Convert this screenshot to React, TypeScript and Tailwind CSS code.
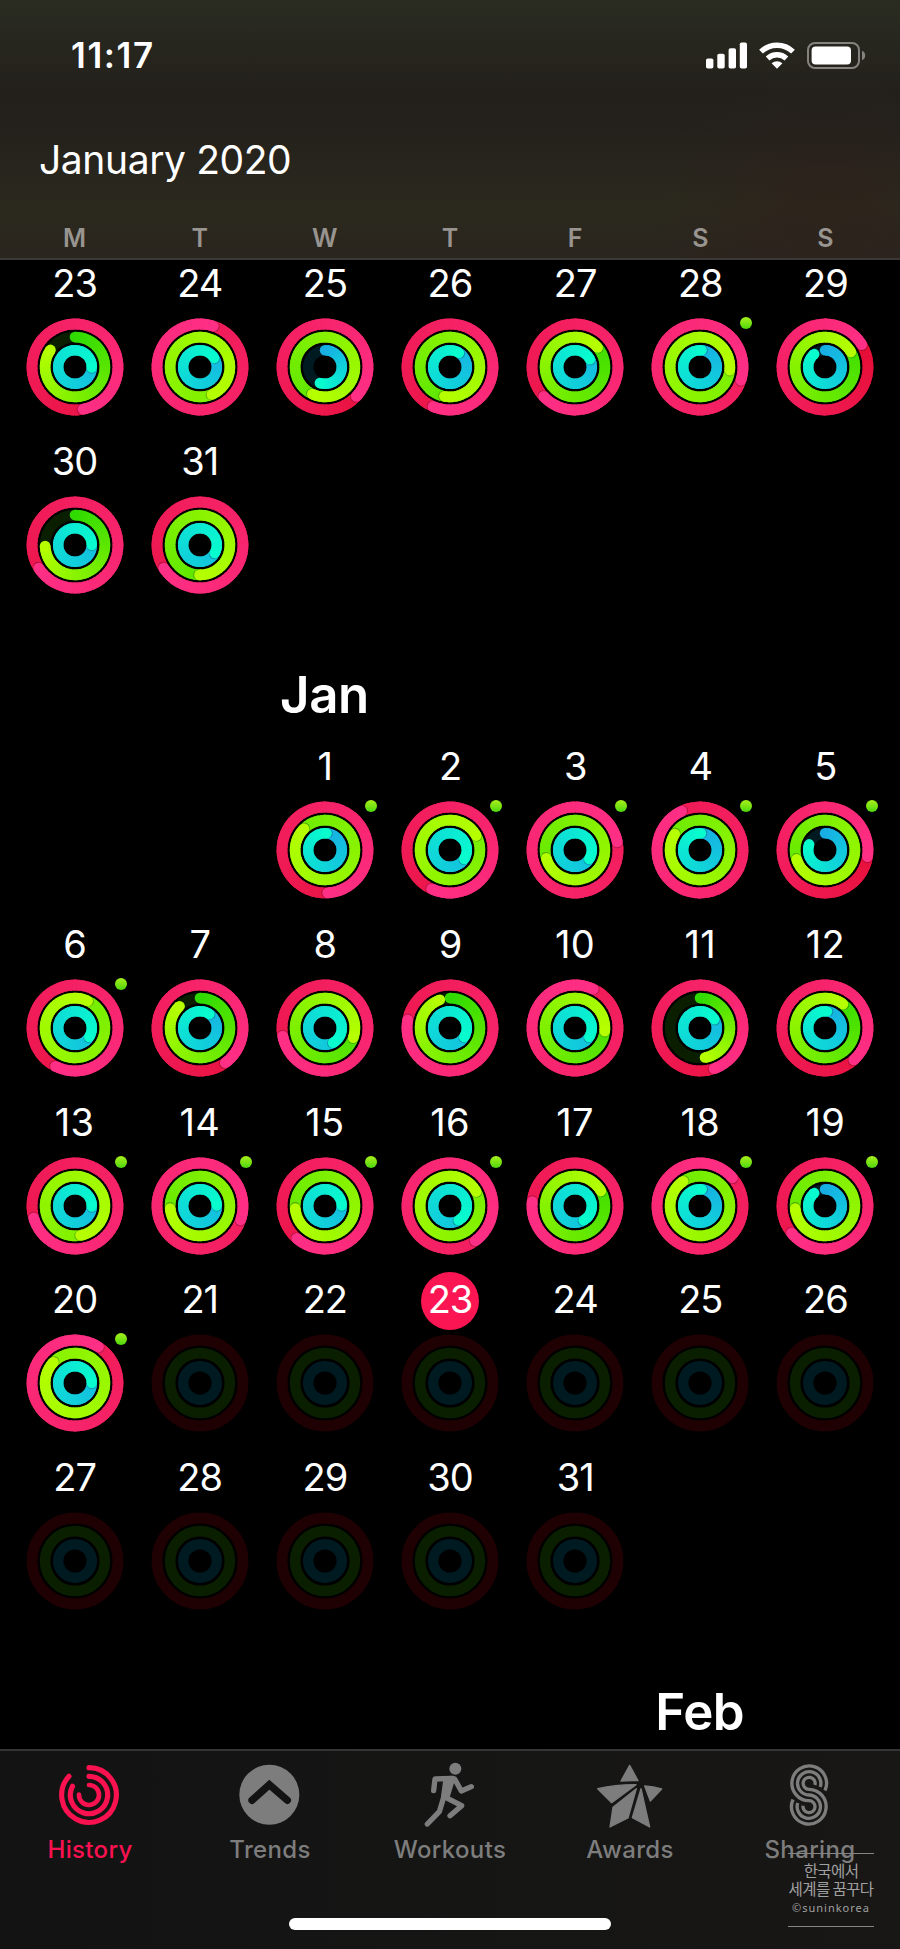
import React from 'react';
import clsx from 'clsx';

type Rgb = [number, number, number];

interface Day {
  day: number;
  // move, exercise and stand progress, 1 = goal reached
  rings?: [number, number, number];
  workout?: boolean;
  today?: boolean;
}

const RINGS: { r: number; width: number; track: string; from: Rgb; to: Rgb }[] = [
  { r: 43, width: 10.8, track: '#1f0003', from: [225, 8, 40], to: [255, 47, 134] },
  { r: 29.9, width: 10.6, track: '#0a1e00', from: [48, 218, 0], to: [182, 255, 0] },
  { r: 16.8, width: 10.4, track: '#001a22', from: [24, 174, 228], to: [8, 252, 206] },
];

const december: Day[] = [
  { day: 23, rings: [1.47, 0.847, 1.255] },
  { day: 24, rings: [2.05, 2.435, 1.16] },
  { day: 25, rings: [1.37, 1.57, 0.55] },
  { day: 26, rings: [1.565, 1.53, 1.09] },
  { day: 27, rings: [1.63, 1.137, 1.175] },
  { day: 28, rings: [2.3, 2.267, 1.015], workout: true },
  { day: 29, rings: [1.163, 1.167, 0.89] },
  { day: 30, rings: [1.66, 0.745, 1.25] },
  { day: 31, rings: [1.66, 1.503, 1.33] },
];

const january: Day[] = [
  { day: 1, rings: [1.49, 1.876, 1.015], workout: true },
  { day: 2, rings: [1.57, 2.17, 1.34], workout: true },
  { day: 3, rings: [2.22, 1.705, 1.34], workout: true },
  { day: 4, rings: [1.93, 1.84, 1.01], workout: true },
  { day: 5, rings: [1.275, 1.7, 0.805], workout: true },
  { day: 6, rings: [1.575, 2.07, 1.34], workout: true },
  { day: 7, rings: [1.4, 0.88, 1.095] },
  { day: 8, rings: [1.72, 1.303, 1.42] },
  { day: 9, rings: [1.78, 0.945, 1.34] },
  { day: 10, rings: [2.07, 1.267, 1.34] },
  { day: 11, rings: [1.447, 0.473, 1.164] },
  { day: 12, rings: [1.383, 1.103, 1.02] },
  { day: 13, rings: [1.705, 2.47, 1.255], workout: true },
  { day: 14, rings: [2.303, 1.737, 1.245], workout: true },
  { day: 15, rings: [1.614, 1.737, 1.245], workout: true },
  { day: 16, rings: [2.4, 2.17, 1.414], workout: true },
  { day: 17, rings: [1.766, 1.167, 1.414] },
  { day: 18, rings: [2.136, 1.905, 1.017], workout: true },
  { day: 19, rings: [1.642, 1.737, 0.89], workout: true },
  { day: 20, rings: [2.092, 2.872, 1.25], workout: true },
  { day: 21 },
  { day: 22 },
  { day: 23, today: true },
  { day: 24 },
  { day: 25 },
  { day: 26 },
  { day: 27 },
  { day: 28 },
  { day: 29 },
  { day: 30 },
  { day: 31 },
];

const point = (r: number, deg: number): [number, number] => {
  const a = (deg * Math.PI) / 180;
  return [r * Math.sin(a), -r * Math.cos(a)];
};

const arc = (r: number, start: number, end: number) => {
  const [x1, y1] = point(r, start);
  const [x2, y2] = point(r, end);
  return `M${x1.toFixed(2)} ${y1.toFixed(2)}A${r} ${r} 0 ${end - start > 180 ? 1 : 0} 1 ${x2.toFixed(2)} ${y2.toFixed(2)}`;
};

const mix = (from: Rgb, to: Rgb, t: number) =>
  `rgb(${from.map((c, i) => Math.round(c + (to[i] - c) * t)).join(',')})`;

const STEP = 6;

const Ring = ({ index, progress }: { index: number; progress?: number }) => {
  const { r, width, track, from, to } = RINGS[index];
  const base = <circle r={r} fill="none" stroke={track} strokeWidth={width} />;
  if (progress === undefined) return base;

  const total = progress * 360;
  const start = Math.max(0, total - 360);
  const [hx, hy] = point(r, total);
  const [sx, sy] = point(r, total + 70 / r);
  const [bx, by] = point(r, 0);

  // each segment runs under the next one so no seam shows between them
  const segments: React.ReactNode[] = [];
  for (let a = start; a < total; a += STEP) {
    segments.push(
      <path
        key={a}
        d={arc(r, a, Math.min(a + STEP * 1.8, total))}
        fill="none"
        stroke={mix(from, to, Math.min(1, (a + STEP / 2) / total))}
        strokeWidth={width}
      />
    );
  }

  return (
    <>
      {base}
      {progress < 1 && <circle cx={bx} cy={by} r={width / 2} fill={mix(from, to, 0)} />}
      {segments}
      {progress > 1 && <circle cx={sx} cy={sy} r={width / 2 - 0.2} fill="#000" opacity={0.25} />}
      <circle cx={hx} cy={hy} r={width / 2} fill={mix(from, to, 1)} />
    </>
  );
};

const ActivityRings = ({ rings }: { rings?: Day['rings'] }) => (
  <svg viewBox="-49 -49 98 98" className="block h-[98px] w-[98px]">
    {RINGS.map((_, i) => (
      <Ring key={i} index={i} progress={rings?.[i]} />
    ))}
  </svg>
);

const DayCell = ({ day, rings, workout, today }: Day) => (
  <div className="flex h-[177.7px] flex-col items-center">
    <div className="relative flex h-[46px] items-center justify-center">
      {today && (
        <span className="absolute left-1/2 top-[-4px] h-[58px] w-[58px] -translate-x-1/2 rounded-full bg-[#fc1553]" />
      )}
      <span
        className={clsx(
          'relative text-[38px] leading-[46px]',
          day > 9 && day < 20 ? 'tracking-[0.3px]' : 'tracking-[-1px]'
        )}
      >
        {day}
      </span>
    </div>
    <div className="relative mt-[12.2px]">
      <ActivityRings rings={rings} />
      {workout && (
        <span className="absolute right-[-3.2px] top-[-1.2px] h-3 w-3 rounded-full bg-linear-to-b from-[#a6f01c] to-[#47d80c]" />
      )}
    </div>
  </div>
);

const Month = ({ days, offset = 0 }: { days: Day[]; offset?: number }) => (
  <div className="grid shrink-0 grid-cols-7 px-3">
    {Array.from({ length: offset }, (_, i) => (
      <div key={`blank-${i}`} />
    ))}
    {days.map((d) => (
      <DayCell key={d.day} {...d} />
    ))}
  </div>
);

const MonthLabel = ({ name, className }: { name: string; className: string }) => (
  <div className="grid h-[127.8px] shrink-0 grid-cols-7 pl-[11.5px] pr-[12.5px] pt-[48px]">
    <h2 className={clsx('text-center text-[51px] font-semibold leading-[64px] tracking-[-0.5px]', className)}>
      {name}
    </h2>
  </div>
);

const StatusBar = () => (
  <div className="flex h-[112px] items-start justify-between pl-[71px] pr-[34px] pt-[35px]">
    <span className="text-[35px] font-semibold leading-[40px] tracking-[1.6px]">11:17</span>
    <div className="flex items-center gap-[12px] pt-[6.5px]">
      <svg viewBox="0 0 41 27" className="h-[27px] w-[41px]" fill="#fff">
        <rect x="0" y="16.5" width="7.4" height="10" rx="1.8" />
        <rect x="11.3" y="11.8" width="7.4" height="14.7" rx="1.8" />
        <rect x="22.6" y="6.3" width="7.4" height="20.2" rx="1.8" />
        <rect x="33.8" y="0.5" width="7.2" height="26" rx="1.8" />
      </svg>
      <svg viewBox="0 0 36 27" className="h-[27px] w-[36px]" fill="none" stroke="#fff" strokeWidth="5.4">
        <path d="M2 9.6a23.3 23.3 0 0 1 32 0" />
        <path d="M8.6 16.4a14 14 0 0 1 18.8 0" />
        <path d="M12.6 21.3a8.4 8.4 0 0 1 10.8 0L18 26.8Z" fill="#fff" stroke="none" />
      </svg>
      <svg viewBox="0 0 59 27" className="h-[27px] w-[59px]">
        <rect x="1" y="1" width="51" height="25" rx="7" fill="none" stroke="#85837f" strokeWidth="2" />
        <rect x="4.6" y="4.6" width="39.4" height="17.8" rx="4" fill="#fff" />
        <path d="M55 8.7c2 .8 3.2 2.6 3.2 4.8S57 17.5 55 18.3Z" fill="#85837f" />
      </svg>
    </div>
  </div>
);

const HistoryIcon = () => (
  <svg viewBox="0 0 216 216" className="h-[72px] w-[72px]">
    <g transform="translate(105 108)" fill="none" stroke="#fa1150" strokeLinecap="round">
      <path d={arc(82, 0, 313)} strokeWidth="15.5" />
      <path d={arc(56, 0, 298)} strokeWidth="15.5" />
      <path d={arc(30, 0, 272)} strokeWidth="14" />
    </g>
  </svg>
);

const TrendsIcon = () => (
  <svg viewBox="0 0 216 216" className="h-[72px] w-[72px]">
    <circle cx="106" cy="107.5" r="90" fill="#7d7d7d" />
    <path d="m54 124 52-47 54 47" fill="none" stroke="#131313" strokeWidth="22" strokeLinecap="round" />
  </svg>
);

const WorkoutsIcon = () => (
  <svg viewBox="42 28 216 216" className="h-[72px] w-[72px]">
    <g fill="none" stroke="#7d7d7d" strokeWidth="16" strokeLinecap="round" strokeLinejoin="round">
      <circle cx="166" cy="57" r="18" fill="#7d7d7d" stroke="none" />
      <path d="m101 123 4-35 50-2" />
      <path d="m164 88 20 36 30-13" />
      <path d="m138 144 47 24-35 30" />
      <path d="m132 140-14 46-36 37" />
      <path d="m138 88 20-2-17 56-10-2Z" fill="#7d7d7d" />
    </g>
  </svg>
);

const AwardsIcon = () => (
  <svg viewBox="582 28 216 216" className="h-[72px] w-[72px]">
    <g fill="#7d7d7d" stroke="#7d7d7d" strokeWidth="4" strokeLinejoin="round">
      <path d="m689 47 25 46q-25-1-51 1Z" />
      <path d="M593 117q58-13 115-12l-73 54Z" />
      <path d="m639 173 70-56-25 88-54 27Z" />
      <path d="m723 117 26 115-52-28Z" />
      <path d="m734 109q26 2 51 9l-34 36Z" />
    </g>
  </svg>
);

const SharingIcon = () => (
  <svg viewBox="1122 28 216 216" className="h-[72px] w-[72px]">
    <g fill="none" stroke="#7d7d7d" strokeWidth="10">
      <path d="M1275 122.5A52 52 0 1 0 1227 153A18 18 0 1 1 1209.3 168" />
      <path d="M1260.800 112A35 35 0 1 0 1227 136A35 35 0 1 1 1193.2 160" />
      <path d="M1244.700 106A18 18 0 1 0 1227 119A52 52 0 1 1 1179 149.5" />
    </g>
  </svg>
);

const tabs = [
  { label: 'History', icon: <HistoryIcon />, active: true },
  { label: 'Trends', icon: <TrendsIcon /> },
  { label: 'Workouts', icon: <WorkoutsIcon /> },
  { label: 'Awards', icon: <AwardsIcon /> },
  { label: 'Sharing', icon: <SharingIcon /> },
];

const TabBar = () => (
  <nav className="relative h-[200px] shrink-0 border-t-2 border-[#353535] bg-linear-to-r from-[#131313] to-[#181716]">
    <div className="grid grid-cols-5 pt-[8px]">
      {tabs.map((tab) => (
        <div key={tab.label} className="flex flex-col items-center">
          {tab.icon}
          <span
            className={clsx(
              'mt-[4px] text-[24px] font-medium leading-[30px] tracking-[0.35px]',
              tab.active ? 'text-[#fa1150]' : 'text-[#7d7d7d]'
            )}
          >
            {tab.label}
          </span>
        </div>
      ))}
    </div>

    {/* Home indicator */}
    <div className="mx-auto mt-[52.5px] h-[12.5px] w-[322px] rounded-full bg-white" />

    {/* Photo watermark */}
    <div className="absolute right-[26px] top-[101.5px] flex h-[74px] w-[86px] flex-col items-center border-y border-[#858585] font-['Noto_Sans_CJK_KR',sans-serif] text-[#a0a0a0]">
      <p className="mt-[7px] whitespace-nowrap text-center text-[15.5px] leading-[18px] tracking-[-0.6px]">
        한국에서
        <br />
        세계를 꿈꾸다
      </p>
      <span className="mt-[3px] whitespace-nowrap font-['Noto_Sans',sans-serif] text-[11px] leading-[16px] tracking-[1px]">
        ©suninkorea
      </span>
    </div>
  </nav>
);

const App: React.FC = () => {
  return (
    <div className="flex h-[1949px] w-[900px] flex-col overflow-hidden bg-black font-['Inter',sans-serif] text-white">
      <header className="h-[260px] shrink-0 border-b-2 border-[#3a3937] bg-[radial-gradient(ellipse_20%_50%_at_92%_80%,rgba(50,28,24,0.35),transparent),linear-gradient(to_bottom,#2a2c21_0%,#23201b_36%,#24211c_50%,#2b291e_80%,#2a251e_100%)]">
        <StatusBar />
        <h1 className="pl-[39px] pt-[24px] text-[39px] leading-[48px] tracking-[-0.4px]">January 2020</h1>
        <div className="mt-[39px] grid grid-cols-7 px-3 text-center text-[25px] font-semibold leading-[30px] text-[#98948f]">
          {['M', 'T', 'W', 'T', 'F', 'S', 'S'].map((d, i) => (
            <span key={i}>{d}</span>
          ))}
        </div>
      </header>

      <main className="flex h-[1489px] shrink-0 flex-col overflow-hidden">
        <Month days={december} />
        <MonthLabel name="Jan" className="col-start-3" />
        <Month days={january} offset={2} />
        <MonthLabel name="Feb" className="col-start-6" />
      </main>

      <TabBar />
    </div>
  );
};

export default App;
